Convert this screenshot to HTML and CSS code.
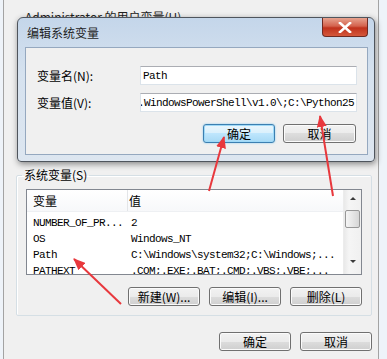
FILE: index.html
```html
<!DOCTYPE html>
<html lang="zh-CN">
<head>
    <meta charset="UTF-8">
    <title>编辑系统变量</title>
    <link rel="stylesheet" href="styles.css">
</head>
<body>
<div class="screen">
    <div class="window">
        <div class="user-label">Administrator 的用户变量(U)</div>
        <fieldset class="group">
            <legend>系统变量(S)</legend>
            <div class="list">
                <div class="list-main">
                    <div class="list-head">
                        <div class="col-name">变量</div>
                        <div class="col-value">值</div>
                    </div>
                    <div class="list-body">
                        <div class="row"><span class="name mono">NUMBER_OF_PR...</span><span class="value mono">2</span></div>
                        <div class="row"><span class="name mono">OS</span><span class="value mono">Windows_NT</span></div>
                        <div class="row"><span class="name mono">Path</span><span class="value mono">C:\Windows\system32;C:\Windows;...</span></div>
                        <div class="row"><span class="name mono">PATHEXT</span><span class="value mono">.COM;.EXE;.BAT;.CMD;.VBS;.VBE;...</span></div>
                    </div>
                </div>
                <div class="scroll">
                    <div class="arrow-up"></div>
                    <div class="thumb"></div>
                    <div class="arrow-down"></div>
                </div>
            </div>
            <div class="btn-row">
                <button class="btn">新建(W)...</button>
                <button class="btn">编辑(I)...</button>
                <button class="btn">删除(L)</button>
            </div>
        </fieldset>
        <div class="btn-row bottom">
            <button class="btn">确定</button>
            <button class="btn">取消</button>
        </div>
    </div>

    <!-- the edit dialog sits on top of the environment variables window -->
    <div class="dialog">
        <div class="titlebar">
            <span class="title">编辑系统变量</span>
            <span class="close">
                <svg width="14" height="11" viewBox="0 0 14 11">
                    <path d="M2 1 L12 10 M12 1 L2 10" stroke="#fff" stroke-width="2.6" stroke-linecap="square"/>
                </svg>
            </span>
        </div>
        <div class="client">
            <div class="form">
                <label>变量名(N):</label>
                <div class="field mono">Path</div>
                <label>变量值(V):</label>
                <div class="field mono end"><span>.WindowsPowerShell\v1.0\;C:\Python25</span><i class="caret"></i></div>
            </div>
            <div class="btn-row dlg">
                <button class="btn focus">确定</button>
                <button class="btn">取消</button>
            </div>
        </div>
    </div>

    <svg class="marks" width="387" height="359" viewBox="0 0 387 359">
        <defs>
            <marker id="head" markerUnits="userSpaceOnUse" markerWidth="12" markerHeight="10" refX="11" refY="5" orient="auto">
                <path d="M0 0 L12 5 L0 10 Z" fill="#e8383d"/>
            </marker>
        </defs>
        <line x1="209" y1="191" x2="224" y2="137" stroke="#e8383d" stroke-width="2" marker-end="url(#head)"/>
        <line x1="333" y1="196" x2="320" y2="116" stroke="#e8383d" stroke-width="2" marker-end="url(#head)"/>
        <line x1="121" y1="304" x2="74" y2="259" stroke="#e8383d" stroke-width="2" marker-end="url(#head)"/>
    </svg>
</div>
</body>
</html>
```

FILE: styles.css
```css
body {
    margin: 0;
    background-color: #eef3f9;
    font-family: "Noto Sans CJK SC", "Liberation Sans", sans-serif;
    font-size: 12px;
    color: #000;
}
.screen {
    position: relative;
    width: 387px;
    height: 359px;
    overflow: hidden;
}
.mono {
    font-family: "Liberation Mono", "Noto Sans CJK SC", monospace;
    font-size: 11px;
    letter-spacing: -0.6px;
}
.window {
    box-sizing: border-box;
    width: 376px;
    height: 359px;
    margin-left: 3px;
    padding-top: 10px;
    background-color: #f0f0f0;
    border-left: 1px solid #a3a3a3;
    border-right: 1px solid #a3a3a3;
}
.user-label {
    height: 14px;
    line-height: 14px;
    padding-left: 21px;
    color: #222;
}
.group {
    margin: 144px 6px 0 12px;
    padding: 0 9px 9px;
    border: 1px solid #d5dfe5;
    border-radius: 2px;
    box-shadow: inset 1px 1px 0 #fff;
}
.group legend {
    margin-left: -4px;
    padding: 0 2px;
    line-height: 14px;
}
.list {
    display: flex;
    height: 86px;
    margin-top: 7px;
    box-sizing: border-box;
    border: 1px solid #828790;
    background-color: #fff;
    overflow: hidden;
}
.list-main {
    flex: 1;
}
.list-head {
    display: flex;
    height: 21px;
    line-height: 21px;
    background: linear-gradient(#ffffff, #f7f8fa);
    border-bottom: 1px solid #eef0f3;
}
.col-name {
    width: 101px;
    padding-left: 6px;
    box-sizing: border-box;
    border-right: 1px solid #e3e5e8;
}
.col-value {
    padding-left: 1px;
}
.list-body {
    padding-top: 3px;
}
.row {
    display: flex;
    height: 16px;
    line-height: 16px;
    white-space: nowrap;
}
.name {
    width: 102px;
    padding-left: 6px;
    box-sizing: border-box;
}
.value {
    padding-left: 2px;
}
.scroll {
    position: relative;
    width: 17px;
    background: linear-gradient(90deg, #e9e9e9, #f5f5f5 30%, #f0f0f0);
    border-left: 1px solid #ececec;
}
.arrow-up, .arrow-down {
    width: 0;
    height: 0;
    margin: 7px auto 0;
    border-left: 3px solid transparent;
    border-right: 3px solid transparent;
}
.arrow-up {
    border-bottom: 3px solid #3a3a3a;
}
.thumb {
    height: 16px;
    margin: 10px 1px 0;
    border: 1px solid #979797;
    border-radius: 2px;
    background: linear-gradient(90deg, #f5f5f5, #e6e6e6 50%, #d6d6d6);
}
.arrow-down {
    margin-top: 32px;
    border-top: 3px solid #3a3a3a;
}
.btn-row {
    display: flex;
    justify-content: flex-end;
    gap: 9px;
    margin-top: 12px;
}
.btn-row.bottom {
    margin: 16px 6px 0 0;
}
.btn {
    width: 72px;
    height: 19px;
    padding: 0;
    border: 1px solid #707070;
    border-radius: 3px;
    background: linear-gradient(#f2f2f2 0%, #ebebeb 50%, #dddddd 50%, #cfcfcf 100%);
    box-shadow: inset 0 0 0 1px #fbfbfb;
    font-family: "Noto Sans CJK SC", "Liberation Sans", sans-serif;
    font-size: 12px;
    line-height: 16px;
    color: #000;
}
.btn.focus {
    border-color: #3c7fb1;
    background: linear-gradient(#eaf6fd 0%, #d9f0fc 50%, #bee6fd 50%, #a7d9f5 100%);
    box-shadow: inset 0 0 0 1px #9fd9f7, 0 0 2px #7cc6ee;
}

/* edit dialog */
.dialog {
    position: absolute;
    left: 17px;
    top: 17px;
    width: 358px;
    height: 145px;
    box-sizing: border-box;
    border: 1px solid #4f555d;
    border-radius: 6px 6px 4px 4px;
    background: linear-gradient(#c4d6ea, #d6e2ef 40%, #dde6f0);
    box-shadow: 1px 2px 6px rgba(0, 0, 0, 0.45);
}
.titlebar {
    display: flex;
    justify-content: space-between;
    align-items: flex-start;
    height: 29px;
}
.title {
    margin: 8px 0 0 9px;
    line-height: 14px;
    color: #1e1e1e;
}
.close {
    display: flex;
    align-items: center;
    justify-content: center;
    width: 46px;
    height: 19px;
    margin-right: 6px;
    box-sizing: border-box;
    border: 1px solid #6e2a22;
    border-top: none;
    border-radius: 0 0 4px 4px;
    background: linear-gradient(#e7a38f, #d4624d 45%, #c0321c 55%, #d4573b);
}
.client {
    height: 108px;
    margin: 0 6px 0 7px;
    box-sizing: border-box;
    padding: 18px 10px 0 11px;
    border: 1px solid #95a8bf;
    background-color: #f0f0f0;
}
.form {
    display: grid;
    grid-template-columns: 103px 217px;
    row-gap: 8px;
    align-items: center;
}
.form label {
    line-height: 19px;
}
.field {
    display: flex;
    align-items: center;
    height: 19px;
    box-sizing: border-box;
    padding: 0 2px;
    border: 1px solid #dbe3ea;
    border-top-color: #abadb3;
    background-color: #fff;
    white-space: nowrap;
    overflow: hidden;
}
.field.end {
    justify-content: flex-end;
    padding: 0 1px 0 0;
}
.caret {
    width: 1px;
    height: 13px;
    margin-left: 1px;
    background-color: #000;
}
.btn-row.dlg {
    gap: 8px;
    margin: 12px 1px 0 0;
}
.btn-row.dlg .btn:last-child {
    width: 73px;
}
.marks {
    position: absolute;
    left: 0;
    top: 0;
    pointer-events: none;
}
```
